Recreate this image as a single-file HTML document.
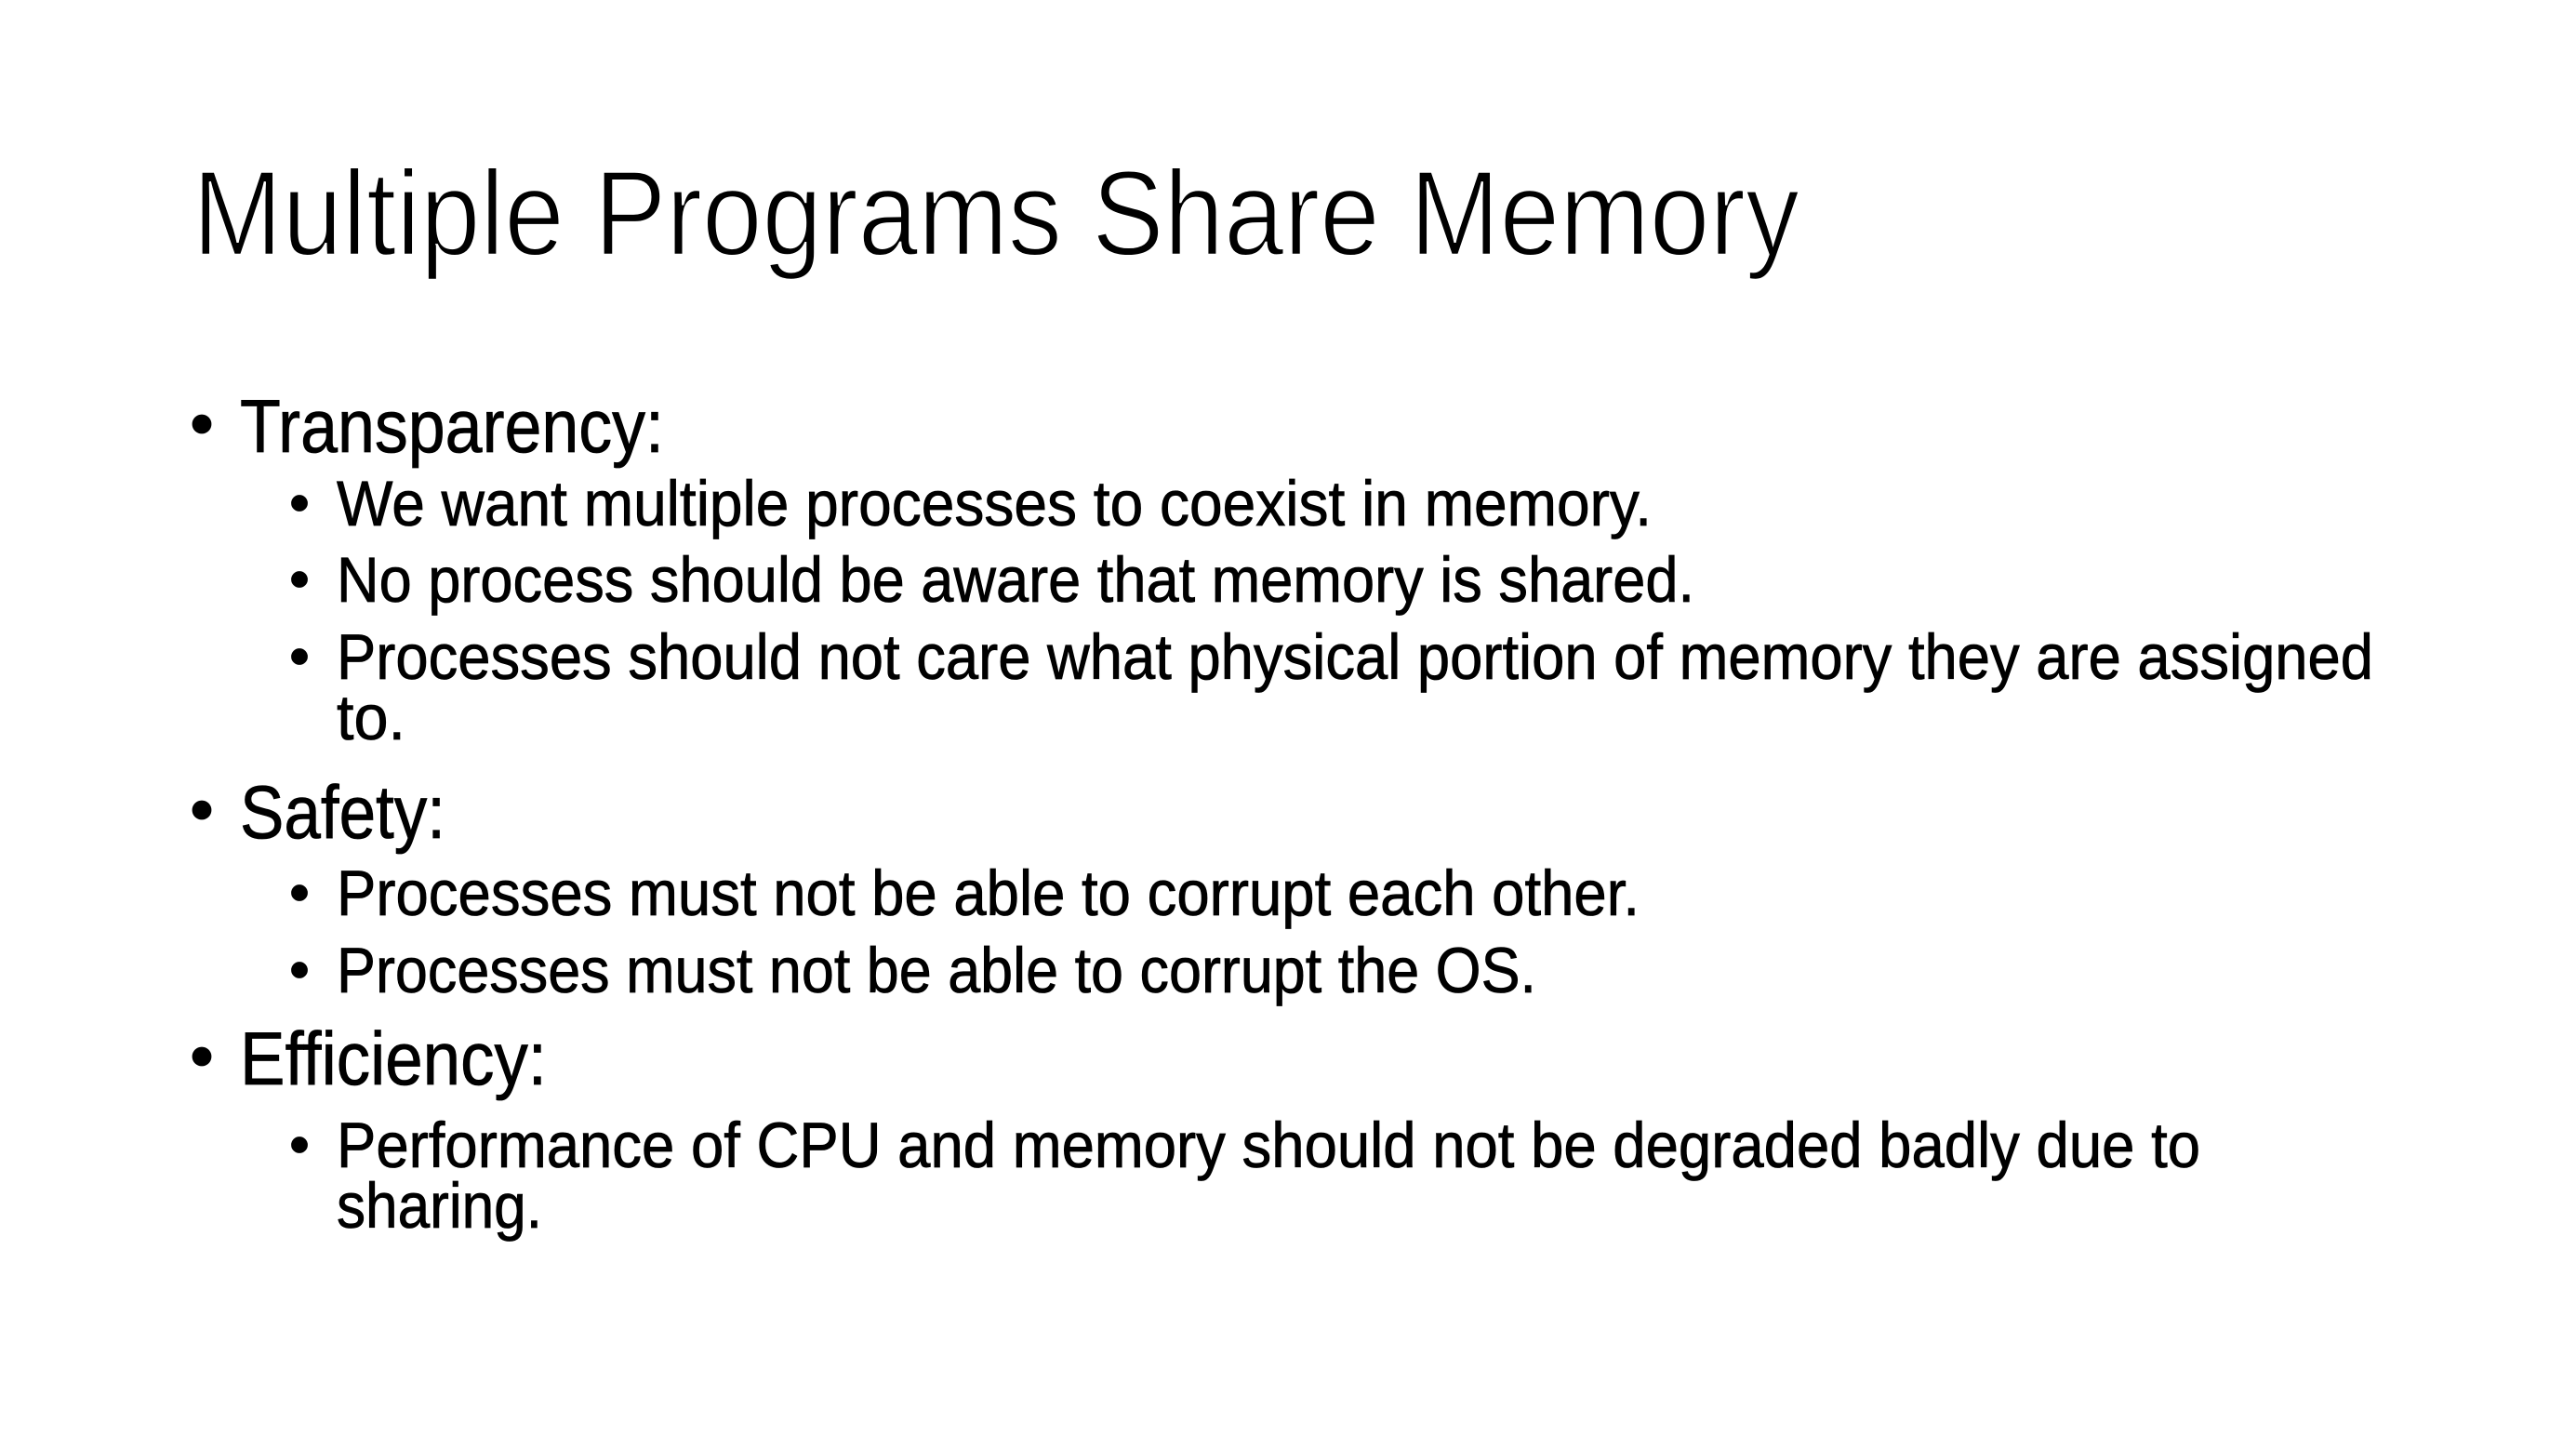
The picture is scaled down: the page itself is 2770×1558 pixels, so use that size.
<!DOCTYPE html>
<html><head><meta charset="utf-8"><style>html,body{margin:0;padding:0;background:#fff;}svg{display:block}</style></head>
<body>
<svg width="2770" height="1558" viewBox="0 0 2770 1558" xmlns="http://www.w3.org/2000/svg" font-family="Liberation Sans, sans-serif" fill="#000">
<rect width="2770" height="1558" fill="#fff"/>
<text x="207" y="274" font-size="130" textLength="1728" lengthAdjust="spacingAndGlyphs" stroke="#fff" stroke-width="2.5" paint-order="normal">Multiple Programs Share Memory</text>

<g stroke="#000" stroke-width="0.8">
<circle cx="217" cy="456" r="10"/>
<text x="258" y="486" font-size="81" textLength="456" lengthAdjust="spacingAndGlyphs">Transparency:</text>
<circle cx="322" cy="541" r="8.5"/>
<text x="362" y="565" font-size="69" textLength="1414" lengthAdjust="spacingAndGlyphs">We want multiple processes to coexist in memory.</text>
<circle cx="322" cy="623" r="8.5"/>
<text x="362" y="647" font-size="69" textLength="1460" lengthAdjust="spacingAndGlyphs">No process should be aware that memory is shared.</text>
<circle cx="322" cy="706" r="8.5"/>
<text x="362" y="730" font-size="69" textLength="2190" lengthAdjust="spacingAndGlyphs">Processes should not care what physical portion of memory they are assigned</text>
<text x="362" y="795" font-size="69" textLength="74" lengthAdjust="spacingAndGlyphs">to.</text>

<circle cx="217" cy="871" r="10"/>
<text x="258" y="901" font-size="81" textLength="221" lengthAdjust="spacingAndGlyphs">Safety:</text>
<circle cx="322" cy="960" r="8.5"/>
<text x="362" y="984" font-size="69" textLength="1401" lengthAdjust="spacingAndGlyphs">Processes must not be able to corrupt each other.</text>
<circle cx="322" cy="1043" r="8.5"/>
<text x="362" y="1067" font-size="69" textLength="1290" lengthAdjust="spacingAndGlyphs">Processes must not be able to corrupt the OS.</text>

<circle cx="217" cy="1136" r="10"/>
<text x="258" y="1166" font-size="81" textLength="330" lengthAdjust="spacingAndGlyphs">Efficiency:</text>
<circle cx="322" cy="1231" r="8.5"/>
<text x="362" y="1255" font-size="69" textLength="2004" lengthAdjust="spacingAndGlyphs">Performance of CPU and memory should not be degraded badly due to</text>
<text x="362" y="1320" font-size="69" textLength="221" lengthAdjust="spacingAndGlyphs">sharing.</text>
</g>
</svg>
</body></html>
